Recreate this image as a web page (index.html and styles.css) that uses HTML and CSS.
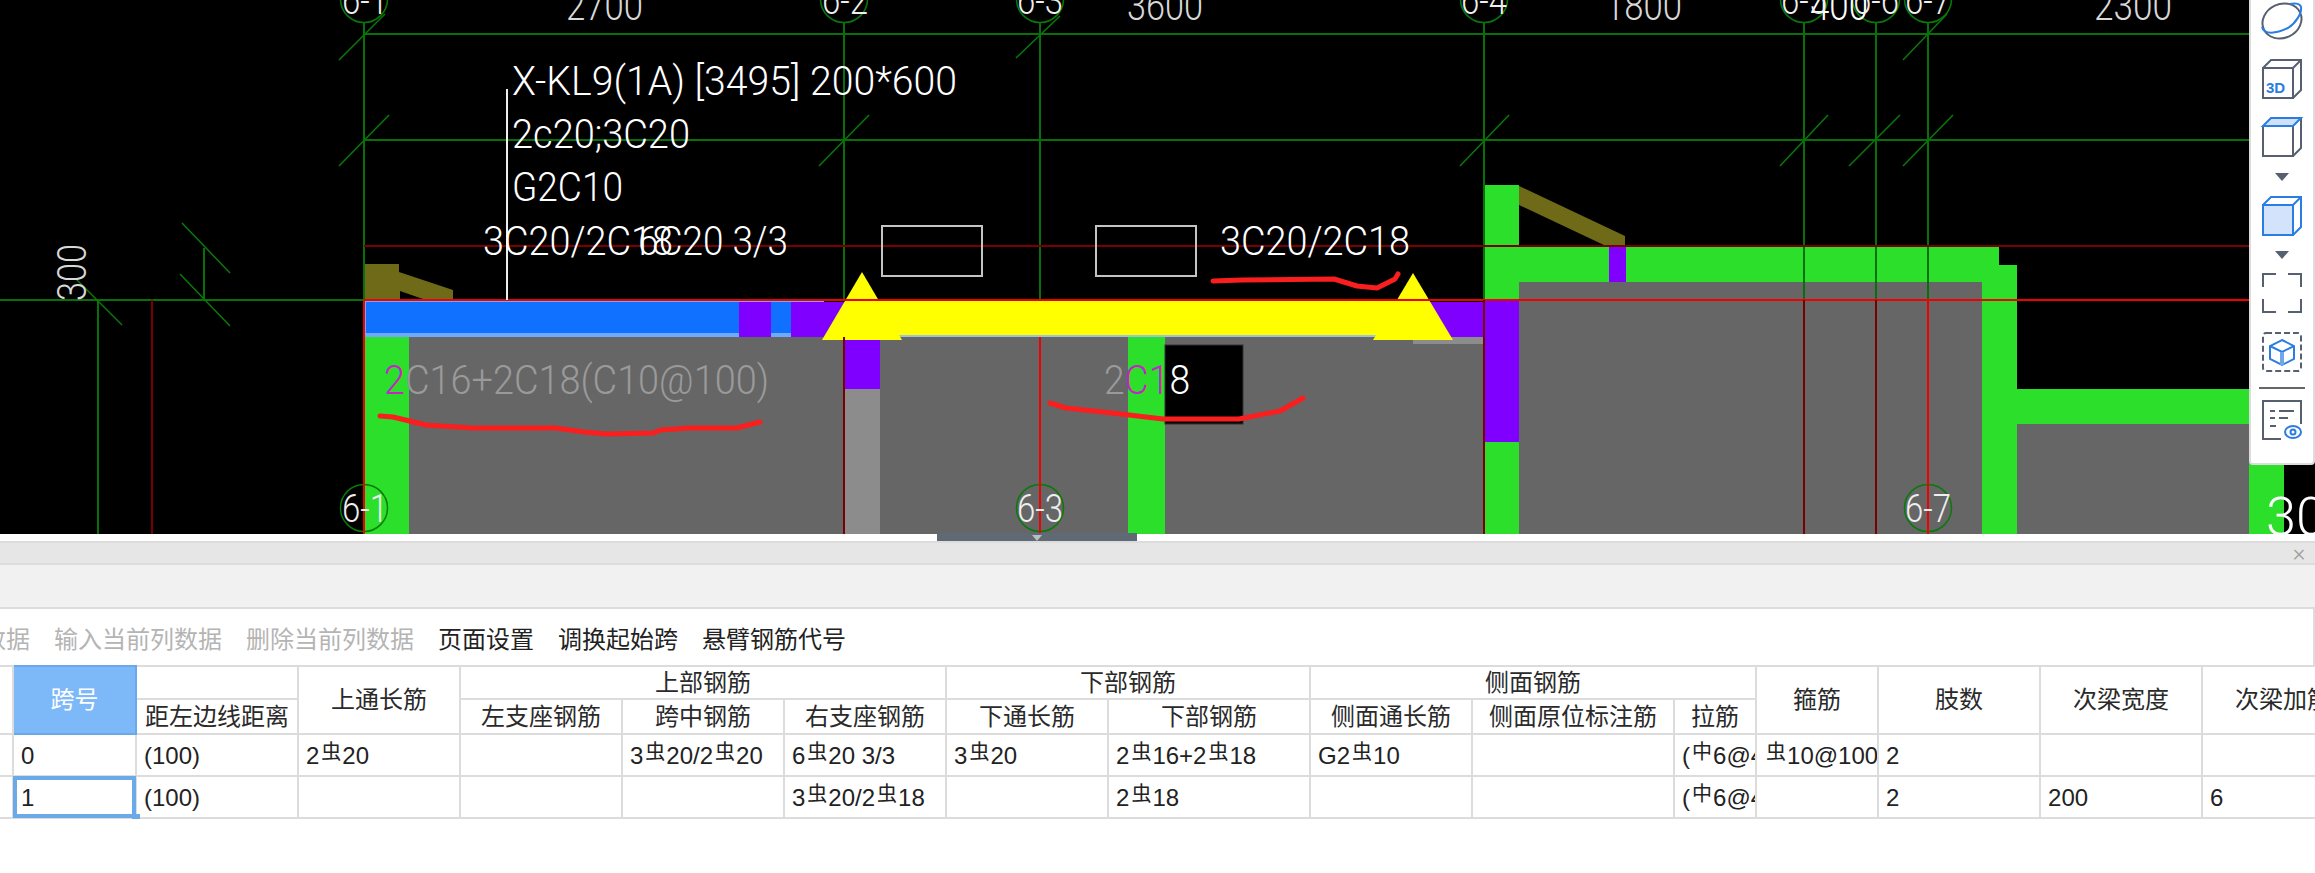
FILE: index.html
```html
<!DOCTYPE html>
<html lang="zh-CN">
<head>
<meta charset="utf-8">
<title>梁平法表格</title>
<link rel="stylesheet" href="styles.css">
</head>
<body>
<section class="view">
  <svg class="cad" width="2315" height="534" viewBox="0 0 2315 534">
    <!-- slab fills -->
    <rect class="grey" x="364" y="337" width="1120" height="197"/>
    <rect class="grey" x="1519" y="282" width="463" height="252"/>
    <rect class="grey" x="2017" y="424" width="240" height="110"/>
    <rect class="green" x="364" y="337" width="45" height="197"/>
    <rect class="green" x="1128" y="337" width="37" height="197"/>
    <rect class="blackbox" x="1165" y="345" width="78" height="79"/>
    <rect class="purple" x="845" y="337" width="35" height="52"/>
    <rect class="lightgrey" x="845" y="389" width="35" height="145"/>
    <rect class="lightgrey" x="1413" y="337" width="70" height="7"/>
    <rect class="green" x="1484" y="185" width="35" height="115"/>
    <rect class="purple" x="1484" y="300" width="35" height="142"/>
    <rect class="green" x="1484" y="442" width="35" height="92"/>
    <polygon class="green" points="1519,246 1999,246 1999,265 2017,265 2017,534 1982,534 1982,282 1519,282"/>
    <rect class="purple" x="1609" y="246" width="17" height="36"/>
    <rect class="green" x="2017" y="389" width="240" height="35"/>
    <rect class="green" x="2249" y="389" width="35" height="145"/>
    <polygon class="olive" points="365,264 399,264 399,272 453,290 453,299 423,299 400,291 400,299 365,299"/>
    <polygon class="olive" points="1519,186 1625,236 1625,246 1606,246 1519,205"/>
    <!-- selected beam -->
    <rect class="bluepale" x="364" y="300" width="460" height="37"/>
    <rect class="blue" x="366" y="302" width="425" height="31"/>
    <rect class="purple" x="739" y="302" width="32" height="35"/>
    <rect class="purple" x="791" y="302" width="692" height="35"/>
    <rect class="paleline" x="846" y="335" width="567" height="2"/>
    <rect class="yellow" x="846" y="301" width="567" height="34"/>
    <polygon class="yellow" points="862,272 902,340 822,340"/>
    <polygon class="yellow" points="1413,273 1453,340 1373,340"/>
    <!-- axis grid, green above, red below -->
    <g class="gridline">
      <path d="M364 34H2255M364 140H2255M0 300H364"/>
      <path d="M364 22V300M844 22V300M1040 22V300M1484 22V300M1804 22V300M1876 22V300M1928 22V300M98 300V534M204 248V300"/>
    </g>
    <g class="fineline">
      <path d="M339 60L385 14M339 166L389 115M819 166L869 115M1016 58L1060 16M1460 166L1509 115M1780 166L1828 115M1849 166L1900 115M1903 166L1953 115M1903 60L1947 14"/>
      <path d="M76 279L122 325M180 274L230 326M182 223L230 273"/>
      <circle cx="364" cy="-1" r="23.5"/><circle cx="844" cy="-1" r="23.5"/><circle cx="1040" cy="-1" r="23.5"/><circle cx="1484" cy="-1" r="23.5"/><circle cx="1804" cy="-1" r="23.5"/><circle cx="1876" cy="-1" r="23.5"/><circle cx="1928" cy="-1" r="23.5"/>
      <circle cx="364" cy="508" r="23.5"/><circle cx="1040" cy="508" r="23.5"/><circle cx="1928" cy="508" r="23.5"/>
    </g>
    <g class="redline"><path d="M364 300H2255M364 300V534M1040 337V534M1928 300V534"/></g>
    <g class="darkred"><path d="M364 246H2255M152 300V534M844 337V534M1484 300V534M1804 300V534M1876 300V534"/></g>
    <rect class="hbox" x="882" y="226" width="100" height="50"/>
    <rect class="hbox" x="1096" y="226" width="100" height="50"/>
    <path class="leader" d="M507 89V300"/>
    <!-- labels -->
    <text class="t" x="512" y="95" textLength="445" lengthAdjust="spacingAndGlyphs">X-KL9(1A) [3495] 200*600</text>
    <text class="t" x="512" y="148" textLength="178" lengthAdjust="spacingAndGlyphs">2c20;3C20</text>
    <text class="t" x="512" y="201" textLength="111" lengthAdjust="spacingAndGlyphs">G2C10</text>
    <text class="t" x="483" y="255" textLength="190" lengthAdjust="spacingAndGlyphs">3C20/2C18</text>
    <text class="t" x="638" y="255" textLength="150" lengthAdjust="spacingAndGlyphs">6C20 3/3</text>
    <text class="t" x="1220" y="255" textLength="190" lengthAdjust="spacingAndGlyphs">3C20/2C18</text>
    <text class="t dim" x="566" y="20" textLength="77" lengthAdjust="spacingAndGlyphs">2700</text>
    <text class="t dim" x="1127" y="20" textLength="76" lengthAdjust="spacingAndGlyphs">3600</text>
    <text class="t dim" x="1605" y="20" textLength="77" lengthAdjust="spacingAndGlyphs">1800</text>
    <text class="t" x="1810" y="20" textLength="58" lengthAdjust="spacingAndGlyphs">400</text>
    <text class="t dim" x="2094" y="20" textLength="78" lengthAdjust="spacingAndGlyphs">2300</text>
    <text class="t dim" transform="translate(86 301) rotate(-90)" textLength="57" lengthAdjust="spacingAndGlyphs">300</text>
    <text class="t ax" x="342" y="14" textLength="46" lengthAdjust="spacingAndGlyphs">6-1</text>
    <text class="t ax" x="822" y="14" textLength="46" lengthAdjust="spacingAndGlyphs">6-2</text>
    <text class="t ax" x="1017" y="14" textLength="46" lengthAdjust="spacingAndGlyphs">6-3</text>
    <text class="t ax" x="1461" y="14" textLength="46" lengthAdjust="spacingAndGlyphs">6-4</text>
    <text class="t ax" x="1781" y="14" textLength="46" lengthAdjust="spacingAndGlyphs">6-5</text>
    <text class="t ax" x="1853" y="14" textLength="46" lengthAdjust="spacingAndGlyphs">6-6</text>
    <text class="t ax" x="1905" y="14" textLength="46" lengthAdjust="spacingAndGlyphs">6-7</text>
    <text class="t ax" x="342" y="522" textLength="46" lengthAdjust="spacingAndGlyphs">6-1</text>
    <text class="t ax" x="1017" y="522" textLength="46" lengthAdjust="spacingAndGlyphs">6-3</text>
    <text class="t ax" x="1905" y="522" textLength="46" lengthAdjust="spacingAndGlyphs">6-7</text>
    <text class="t big" x="2266" y="535">30</text>
    <text class="t" x="384" y="394" textLength="385" lengthAdjust="spacingAndGlyphs"><tspan class="mag">2</tspan><tspan class="gt">C16+2C18(C10@100)</tspan></text>
    <text class="t" x="1104" y="394" textLength="86" lengthAdjust="spacingAndGlyphs"><tspan class="gt">2</tspan><tspan class="mag">C1</tspan>8</text>
    <!-- hand-drawn red marks -->
    <g class="ink">
      <polyline points="380,416 393,417 426,425 472,428 556,428 584,432 607,434 653,433 661,430 689,428 737,428 760,422"/>
      <polyline points="1050,403 1066,408 1112,413 1163,419 1239,419 1280,411 1303,398"/>
      <polyline points="1213,281 1242,280 1334,279 1357,286 1377,288 1395,279 1398,274"/>
    </g>
  </svg>

  <aside class="tools">
    <svg class="ico sphere" width="40" height="40" viewBox="0 0 40 40"><ellipse class="s" cx="20" cy="19" rx="20" ry="17" transform="rotate(-25 20 19)"/><path class="b" d="M0 25C2 33 14 32 26 26C34 21 40 11 39 5C38 1 32 1 28 2"/></svg>
    <svg class="ico cube3d" width="40" height="40" viewBox="0 0 40 40"><path class="s" d="M1 9H31V39H1ZM1 9L9 1H39V31L31 39M31 9L39 1"/><text class="lbl" x="4" y="34">3D</text></svg>
    <svg class="ico cube2" width="40" height="40" viewBox="0 0 40 40"><path class="fillb" d="M1 9L9 1H39L31 9Z"/><path class="s" d="M1 9V39H31V9M31 39L39 31V1"/><path class="b" d="M1 9L9 1H39L31 9Z"/></svg>
    <svg class="tri tri1" width="14" height="8" viewBox="0 0 14 8"><path class="trif" d="M0 0H14L7 8Z"/></svg>
    <svg class="ico cube4" width="40" height="40" viewBox="0 0 40 40"><path class="fillb2" d="M1 9H31V39H1Z"/><path class="b" d="M1 9H31V39H1ZM1 9L9 1H39V31L31 39M31 9L39 1"/></svg>
    <svg class="tri tri2" width="14" height="8" viewBox="0 0 14 8"><path class="trif" d="M0 0H14L7 8Z"/></svg>
    <svg class="ico corners" width="40" height="40" viewBox="0 0 40 40"><path class="s" d="M1 14V1H14M26 1H39V14M39 26V39H26M14 39H1V26"/></svg>
    <svg class="ico dash" width="40" height="40" viewBox="0 0 40 40"><rect class="sd" x="1" y="1" width="38" height="38" rx="3"/><path class="b" d="M20 8L32 14V27L20 33L8 27V14ZM8 14L20 20L32 14"/><path class="b thick" d="M20 20V33"/></svg>
    <div class="rule"></div>
    <svg class="ico report" width="40" height="40" viewBox="0 0 40 40"><path class="s" d="M19 39H1V1H39V24M8 11H13M17 11H32M8 18H13M17 18H26M8 26H14"/><ellipse class="b" cx="31" cy="32" rx="8" ry="6"/><circle class="b" cx="31" cy="32" r="2.5"/></svg>
  </aside>

  <div class="handle"><span class="handle-arrow"></span></div>
</section>

<section class="panel">
  <div class="titlebar"><span class="close">×</span></div>
  <div class="subbar"></div>
  <nav class="actions">
    <span class="act off clip">数据</span>
    <span class="act off">输入当前列数据</span>
    <span class="act off">删除当前列数据</span>
    <span class="act">页面设置</span>
    <span class="act">调换起始跨</span>
    <span class="act">悬臂钢筋代号</span>
  </nav>
  <div class="tablewrap">
    <table class="grid">
      <colgroup>
        <col class="w13"><col class="w123"><col class="w162"><col class="w162"><col class="w162"><col class="w162"><col class="w162"><col class="w162"><col class="w202"><col class="w162"><col class="w202"><col class="w82"><col class="w122"><col class="w162"><col class="w162"><col class="w162">
      </colgroup>
      <thead>
        <tr class="h1">
          <th class="edge" rowspan="2"></th>
          <th class="active" rowspan="2">跨号</th>
          <th></th>
          <th rowspan="2">上通长筋</th>
          <th colspan="3">上部钢筋</th>
          <th colspan="2">下部钢筋</th>
          <th colspan="3">侧面钢筋</th>
          <th rowspan="2">箍筋</th>
          <th rowspan="2">肢数</th>
          <th rowspan="2">次梁宽度</th>
          <th rowspan="2">次梁加筋</th>
        </tr>
        <tr class="h2">
          <th>距左边线距离</th>
          <th>左支座钢筋</th>
          <th>跨中钢筋</th>
          <th>右支座钢筋</th>
          <th>下通长筋</th>
          <th>下部钢筋</th>
          <th>侧面通长筋</th>
          <th>侧面原位标注筋</th>
          <th>拉筋</th>
        </tr>
      </thead>
      <tbody>
        <tr>
          <td class="edge"></td>
          <td>0</td>
          <td>(100)</td>
          <td>2<i class="rb">虫</i>20</td>
          <td></td>
          <td>3<i class="rb">虫</i>20/2<i class="rb">虫</i>20</td>
          <td>6<i class="rb">虫</i>20 3/3</td>
          <td>3<i class="rb">虫</i>20</td>
          <td>2<i class="rb">虫</i>16+2<i class="rb">虫</i>18</td>
          <td>G2<i class="rb">虫</i>10</td>
          <td></td>
          <td>(<i class="rb">中</i>6@400)</td>
          <td><i class="rb">虫</i>10@100(2)</td>
          <td>2</td>
          <td></td>
          <td></td>
        </tr>
        <tr>
          <td class="edge"></td>
          <td class="sel">1</td>
          <td>(100)</td>
          <td></td>
          <td></td>
          <td></td>
          <td>3<i class="rb">虫</i>20/2<i class="rb">虫</i>18</td>
          <td></td>
          <td>2<i class="rb">虫</i>18</td>
          <td></td>
          <td></td>
          <td>(<i class="rb">中</i>6@400)</td>
          <td></td>
          <td>2</td>
          <td>200</td>
          <td>6</td>
        </tr>
      </tbody>
    </table>
  </div>
</section>
</body>
</html>
```

FILE: styles.css
```css
* { box-sizing: border-box; }
html, body { margin: 0; padding: 0; height: 873px; overflow: hidden; background: #fff; }
body { font-family: "Liberation Sans", "Noto Sans CJK SC", sans-serif; color: #222; }

/* drawing canvas */
.view { position: relative; height: 534px; background: #000; }
.cad { display: block; }
.grey { fill: #666; }
.green { fill: #2bdf2b; }
.lightgrey { fill: #8c8c8c; }
.purple { fill: #8000ff; }
.olive { fill: #6e6a17; }
.blue { fill: #1070ff; }
.bluepale { fill: #70aaff; }
.paleline { fill: #9fc4d8; }
.yellow { fill: #ffff00; }
.blackbox { fill: #000; stroke: #333; stroke-width: 1; }
.gridline path { fill: none; stroke: #08700a; stroke-width: 2; }
.fineline path, .fineline circle { fill: none; stroke: #087a08; stroke-width: 1.5; }
.redline path { fill: none; stroke: #f00000; stroke-width: 2; }
.darkred path { fill: none; stroke: #7a0000; stroke-width: 2; }
.hbox { fill: none; stroke: #c4c4c4; stroke-width: 2; }
.leader { stroke: #eee; stroke-width: 2; fill: none; }
.t { font-family: Roboto, "Liberation Sans", sans-serif; font-weight: 300; font-size: 40px; fill: #fff; }
.dim { fill: #d8d8d8; }
.ax { font-size: 38px; fill: #eee; }
.big { font-size: 54px; }
.mag { fill: #c426c4; }
.gt { fill: #9a9a9a; }
.ink polyline { fill: none; stroke: #fa1e1e; stroke-width: 5; stroke-linecap: round; stroke-linejoin: round; }

/* floating view-cube toolbar */
.tools {
  position: absolute; top: 0; left: 2249px; width: 66px; height: 465px;
  display: flex; flex-direction: column; align-items: center;
  padding: 2px 0 0 0; background: #fff;
  border-left: 2px solid #dcdcdc; border-right: 2px solid #dcdcdc; border-bottom: 2px solid #dcdcdc;
  border-radius: 0 0 4px 4px;
}
.ico { display: block; flex: none; overflow: visible; }
.s { fill: none; stroke: #566070; stroke-width: 2; }
.sd { fill: none; stroke: #566070; stroke-width: 2; stroke-dasharray: 6 3; }
.b { fill: none; stroke: #2a7de1; stroke-width: 2; }
.thick { stroke-width: 4; stroke: #6fa8ea; }
.fillb { fill: #cfe0f8; }
.fillb2 { fill: #d2e3fb; }
.trif { fill: #566070; }
.lbl { font-family: "Liberation Sans", sans-serif; font-size: 15px; font-weight: 700; fill: #2a7de1; }
.tri { display: block; flex: none; }
.cube3d { margin-top: 17px; }
.cube2 { margin-top: 18px; }
.tri1 { margin-top: 16px; }
.cube4 { margin-top: 15px; }
.tri2 { margin-top: 15px; }
.corners { margin-top: 14px; }
.dash { margin-top: 19px; }
.rule { flex: none; width: 46px; height: 2px; margin-top: 15px; background: #666; }
.report { margin-top: 11px; }

.handle {
  position: absolute; left: 937px; top: 533px; width: 200px; height: 8px;
  background: #5f6a75; display: flex; justify-content: center; z-index: 2;
}
.handle-arrow { width: 0; height: 0; margin-top: 2px; border-left: 5px solid transparent; border-right: 5px solid transparent; border-top: 6px solid #b9bec4; }

/* lower panel */
.panel { padding-top: 7px; background: #fff; }
.titlebar {
  height: 24px; background: #e6e6e6;
  border-top: 2px solid #dcdcdc; border-bottom: 2px solid #dcdcdc;
  display: flex; justify-content: flex-end; align-items: center; padding-right: 7px;
}
.close { font-family: Roboto, sans-serif; font-weight: 300; font-size: 24px; line-height: 20px; color: #a0a0a0; width: 18px; text-align: center; }
.subbar { height: 44px; background: #f1f1f1; border-bottom: 2px solid #dcdcdc; }
.actions {
  height: 56px; display: flex; align-items: center; gap: 24px;
  font-size: 24px; white-space: nowrap; border-right: 2px solid #dcdcdc; overflow: hidden;
}
.act { color: #222; flex: none; }
.off { color: #b4b4b4; }
.clip { margin-left: -18px; }

.tablewrap { overflow: hidden; }
.grid { border-collapse: collapse; table-layout: fixed; width: 2364px; font-size: 24px; margin-top: 0; }
.w13 { width: 13px; } .w82 { width: 82px; } .w122 { width: 122px; } .w123 { width: 123px; }
.w162 { width: 162px; } .w202 { width: 202px; }
.grid th, .grid td {
  border: 2px solid #dcdcdc; padding: 0; white-space: nowrap; overflow: hidden;
  font-weight: 400; line-height: 28px;
}
.grid th { text-align: center; color: #2a2a2a; }
.grid td { padding: 1px 0 0 7px; text-align: left; color: #222; position: relative; }
.grid .edge { border-left: 0; padding: 0; }
.h1 th { height: 33px; }
.h2 th { height: 35px; }
.grid tbody tr { height: 42px; }
.grid .active { background: #7db8f8; color: #fff; border: 2px solid #6aa8ea; }
.grid td.sel { overflow: visible; }
.sel::before { content: ""; position: absolute; inset: -1px; border: 4px solid #6aaae8; }
.sel::after { content: ""; position: absolute; right: -5px; bottom: -5px; width: 8px; height: 8px; background: #6aaae8; }
.rb { font-style: normal; font-size: 20px; font-family: "Noto Sans CJK SC", sans-serif; position: relative; top: -5px; margin: 0 1px 0 2px; }
```
